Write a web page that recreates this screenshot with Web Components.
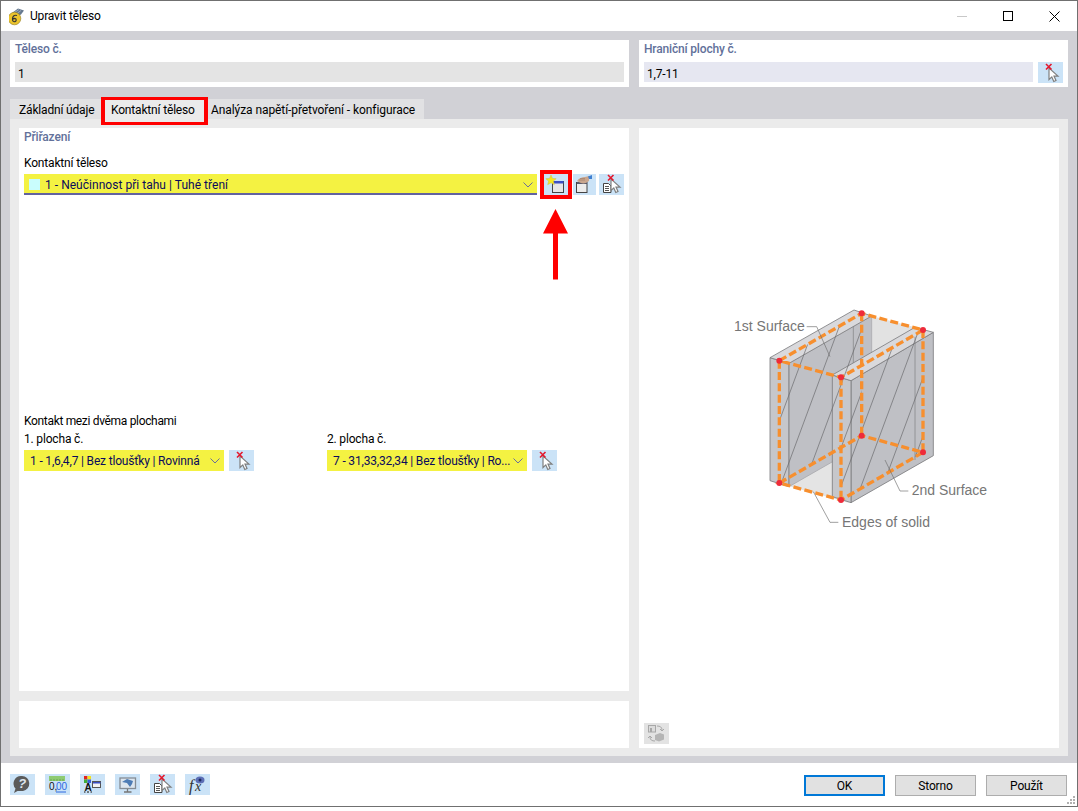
<!DOCTYPE html>
<html lang="cs">
<head>
<meta charset="utf-8">
<title>Upravit těleso</title>
<style>
  html, body { margin: 0; background: #fff; }
  body { font: 12px Roboto, "Liberation Sans", sans-serif; color: #000; letter-spacing: -.17px; }
  .top-row { display: flex; gap: 10px; }
  .top-row rs-field:first-child { width: 619px; }
  .top-row rs-field:last-child { width: 429px; }
  .split { display: grid; grid-template-columns: 610px 420px; gap: 10px; height: 620px; }
  .left { display: flex; flex-direction: column; gap: 10px; }
  .line { height: 18px; line-height: 18px; }
  .head { color: #62719a; font-weight: 500; }
  .row { display: flex; align-items: stretch; position: relative; }
  .row rs-combo { width: 513px; letter-spacing: .03px; }
  .pairs { display: grid; grid-template-columns: 303px 1fr; }
  .pair { display: flex; gap: 5px; margin-top: 2px; }
  .pair rs-combo { width: 200px; }
  rs-arrow { position: absolute; left: 519px; top: 35px; }
</style>
</head>
<body>
<rs-dialog heading="Upravit těleso">
  <div class="top-row">
    <rs-field label="Těleso č." value="1"></rs-field>
    <rs-field label="Hraniční plochy č." value="1,7-11" tone="blue"><rs-icon-btn icon="pick"></rs-icon-btn></rs-field>
  </div>
  <rs-tabs>
    <rs-tab w="91">Základní údaje</rs-tab>
    <rs-tab w="107" active>Kontaktní těleso</rs-tab>
    <rs-tab w="216" pad="3" style="letter-spacing:-.08px">Analýza napětí-přetvoření - konfigurace</rs-tab>
    <div slot="body" class="split">
      <div class="left">
        <rs-panel style="height:563px">
          <div class="line head">Přiřazení</div>
          <div class="line" style="margin-top:8px">Kontaktní těleso</div>
          <div class="row" style="margin-top:2px">
            <rs-combo text="1 - Neúčinnost při tahu | Tuhé tření" swatch underline></rs-combo>
            <rs-icon-btn icon="newwin" marked style="width:24px;margin-left:7px"></rs-icon-btn>
            <rs-icon-btn icon="handwin" style="width:23px;margin-left:5px"></rs-icon-btn>
            <rs-icon-btn icon="docpick" style="margin-left:3px"></rs-icon-btn>
            <rs-arrow></rs-arrow>
          </div>
          <div class="line" style="margin-top:217px;letter-spacing:-.33px">Kontakt mezi dvěma plochami</div>
          <div class="pairs">
            <div>
              <div class="line">1. plocha č.</div>
              <div class="pair"><rs-combo text="1 - 1,6,4,7 | Bez tloušťky | Rovinná"></rs-combo><rs-icon-btn icon="pick"></rs-icon-btn></div>
            </div>
            <div>
              <div class="line">2. plocha č.</div>
              <div class="pair"><rs-combo text="7 - 31,33,32,34 | Bez tloušťky | Ro..."></rs-combo><rs-icon-btn icon="pick"></rs-icon-btn></div>
            </div>
          </div>
        </rs-panel>
        <rs-panel style="height:47px"></rs-panel>
      </div>
      <rs-diagram><rs-icon-btn icon="swap" disabled></rs-icon-btn></rs-diagram>
    </div>
  </rs-tabs>
  <rs-icon-btn slot="tools" icon="help"></rs-icon-btn>
  <rs-icon-btn slot="tools" icon="decimals"></rs-icon-btn>
  <rs-icon-btn slot="tools" icon="colors"></rs-icon-btn>
  <rs-icon-btn slot="tools" icon="monitor"></rs-icon-btn>
  <rs-icon-btn slot="tools" icon="docpick"></rs-icon-btn>
  <rs-icon-btn slot="tools" icon="fx"></rs-icon-btn>
  <rs-button slot="actions" primary>OK</rs-button>
  <rs-button slot="actions">Storno</rs-button>
  <rs-button slot="actions">Použít</rs-button>
</rs-dialog>

<script>
const pickParts = (x, y) => `
  <path d="M${x} ${y}v11.500l2.800-2.600 2 4.600 2.200-1-2-4.400h4z" fill="#fff" stroke="#7f7f7f" stroke-width="1.200"/>
  <path d="M${x-3} ${y-4}l5.500 5.500M${x+2.500} ${y-4}l-5.500 5.500" stroke="#e3182d" stroke-width="1.600"/>`;

const ICONS = {
  pick: pickParts(11, 6),
  newwin: `
    <rect x="8.500" y="7.500" width="11" height="11" fill="#e6e6e6" stroke="#444"/>
    <rect x="9" y="7" width="10.500" height="2.500" fill="#3a4fc4"/>
    <path d="M7 1l1.500 3.400 3.700.3-2.800 2.400.9 3.600L7 8.800l-3.300 1.900.9-3.600L1.800 4.700l3.700-.3z" fill="#f6e61e" stroke="#c9bc4a" stroke-width=".5"/>`,
  handwin: `
    <rect x="3.500" y="8.500" width="10.500" height="10" fill="#ececec" stroke="#444"/>
    <rect x="4" y="8" width="10" height="2" fill="#55586b"/>
    <path d="M4 7c2-3 5-4 8-4l4-1v5l-3 2c-3 1-6 0-9-2z" fill="#c9a68e"/>
    <path d="M6 6h6M7 4.500h5" stroke="#a07f6c" stroke-width=".7"/>
    <path d="M15 2.500l4-1.500v4h-3z" fill="#3f7fd0"/>`,
  docpick: `
    <path d="M4.500 9.500h5l2.500 2.500v6.500H4.500z" fill="#fff" stroke="#444"/>
    <path d="M6 12.500h4M6 14.500h4M6 16.500h4" stroke="#444" stroke-width=".9"/>` + pickParts(12, 5),
  help: `
    <path d="M12 2a7.500 7.500 0 0 1 1 14.900c-2 .3-4 .2-5.500.2L4 19l1.500-4.500A7.500 7.500 0 0 1 12 2z" fill="#5b5b5b"/>
    <text x="12.200" y="14" font-family="Liberation Sans, sans-serif" font-size="13" font-weight="bold" font-style="italic" text-anchor="middle" fill="#dfe6ee">?</text>`,
  decimals: `
    <rect x="4" y="2" width="16" height="5" fill="#8ecb72"/>
    <path d="M6 5v2M9 5v2M12 5v2M15 5v2M18 5v2" stroke="#5f9c49" stroke-width=".8"/>
    <text x="4" y="16" font-family="Liberation Sans, sans-serif" font-size="10" fill="#111">0,</text>
    <text x="11" y="16" font-family="Liberation Sans, sans-serif" font-size="10" fill="#2c68e0">00</text>
    <path d="M11 18h10" stroke="#2c68e0" stroke-width="1"/>`,
  colors: `
    <rect x="4" y="2" width="3.500" height="3.500" fill="#e32222"/>
    <rect x="7.500" y="2" width="3.500" height="3.500" fill="#f4e21c"/>
    <rect x="4" y="5.500" width="3.500" height="3.500" fill="#3fae3a"/>
    <rect x="7.500" y="5.500" width="3.500" height="3.500" fill="#3a5fd8"/>
    <text x="8" y="17" font-family="Liberation Sans, sans-serif" font-size="10" font-weight="bold" text-anchor="middle" fill="#111">A</text>
    <path d="M4 18h1.500M7 18h2M10.500 18H12" stroke="#111" stroke-width="1"/>
    <rect x="12.500" y="7.500" width="8" height="6" fill="#f3f3f3" stroke="#555"/>
    <rect x="13" y="8" width="7.500" height="1.500" fill="#3a4fc4"/>`,
  monitor: `
    <rect x="5" y="4" width="15.500" height="10.500" fill="#dce6ef" stroke="#858d95" stroke-width="1.300"/>
    <path d="M7 8l5-3 6 2-1 3-2 3-3-4z" fill="#4d7cb5"/>
    <path d="M12.500 15v2.500M9 18h7.500" stroke="#777" stroke-width="1.300"/>`,
  fx: `
    <text x="4" y="17" font-family="Liberation Serif, serif" font-size="16" font-style="italic" fill="#333">f</text>
    <text x="10" y="17" font-family="Liberation Serif, serif" font-size="14" font-style="italic" fill="#333">x</text>
    <ellipse cx="15" cy="6" rx="4.500" ry="3.500" fill="#5d6fb6"/>
    <circle cx="15" cy="6" r="1.500" fill="#1d2a60"/>`,
  swap: `
    <rect x="4.500" y="2.500" width="7" height="6.500" fill="#dcdcdc" stroke="#a8a8a8"/>
    <rect x="6" y="5" width="2" height="4" fill="#a8a8a8"/>
    <path d="M13 3c3 0 5 1 5 4M16 6l2 2 2-2M11 18c-3 0-5-1-5-4M4 15l2-2 2 2" fill="none" stroke="#a8a8a8"/>
    <path d="M11 12l5-2 4 1.500v5l-5 2-4-1.500z" fill="#b5b5b5"/>`
};

class RsDialog extends HTMLElement {
  constructor() {
    super();
    this.attachShadow({mode:'open'}).innerHTML = `
      <style>
        :host { display: flex; flex-direction: column; box-sizing: border-box; width: 1078px; height: 807px;
          border: 1px solid #707070; background: #fff; position: relative; }
        .bar { height: 30px; display: flex; align-items: center; flex: none; }
        .logo { margin-left: 8px; width: 18px; height: 18px; margin-top: 1px; }
        .title { margin-left: 3px; font-size: 12px; }
        .ctl { margin-left: auto; display: flex; }
        .ctl span { width: 46px; height: 30px; display: flex; align-items: center; justify-content: center; }
        main { flex: none; height: 732px; box-sizing: border-box; background: #d1d1d6; padding: 9px 9px 0; }
        footer { flex: 1; display: flex; padding: 11px 10px 0 9px; }
        .tools { display: flex; gap: 10px; }
        .tools ::slotted(*) { height: 21px; }
        .actions { margin-left: auto; display: flex; gap: 10px; margin-top: 1px; height: 21px; }
        .grip { position: absolute; right: 1px; bottom: 1px; }
      </style>
      <div class="bar">
        <svg class="logo" viewBox="0 0 18 18">
          <path d="M1 6.500L9 .5l6 2-3 4-6 3z" fill="#66798f"/>
          <path d="M4 5.500l6-4M6 7l6-4.500" stroke="#a9b8c9" stroke-width=".8"/>
          <circle cx="5.500" cy="10.500" r="6.300" fill="#ecc42c" stroke="#8f7a22" stroke-width=".6"/>
          <path d="M8 7.500c-3-1-4.500 1-4.500 3.500s1.200 3 2.500 2.600 2-3-.3-3.200c-1 0-1.700.5-2 1" fill="none" stroke="#333" stroke-width="1.200"/>
        </svg>
        <span class="title"></span>
        <div class="ctl">
          <span><svg width="10" height="10"><path d="M0 5.500h10" stroke="#c8c8c8"/></svg></span>
          <span><svg width="10" height="10"><rect x=".5" y=".5" width="9" height="9" fill="none" stroke="#000"/></svg></span>
          <span><svg width="11" height="11"><path d="M.5.500l10 10M10.500.500l-10 10" stroke="#000"/></svg></span>
        </div>
      </div>
      <main><slot></slot></main>
      <footer>
        <div class="tools"><slot name="tools"></slot></div>
        <div class="actions"><slot name="actions"></slot></div>
      </footer>
      <svg class="grip" width="10" height="9" fill="#b0b0b0">
        <rect x="7" y="0" width="2" height="2"/><rect x="4" y="3" width="2" height="2"/><rect x="7" y="3" width="2" height="2"/>
        <rect x="1" y="6" width="2" height="2"/><rect x="4" y="6" width="2" height="2"/><rect x="7" y="6" width="2" height="2"/>
      </svg>`;
    this.shadowRoot.querySelector('.title').textContent = this.getAttribute('heading');
  }
}

class RsField extends HTMLElement {
  constructor() {
    super();
    this.attachShadow({mode:'open'}).innerHTML = `
      <style>
        :host { display: block; box-sizing: border-box; height: 47px; background: #fff; padding: 0 5px; }
        .label { height: 22px; line-height: 18px; color: #62719a; font-weight: 500; }
        .row { display: flex; gap: 5px; }
        .input { flex: 1; height: 20px; line-height: 24px; padding-left: 3px; background: #e4e4e4; overflow: hidden; }
        :host([tone=blue]) .input { background: #e6e7f1; }
        ::slotted(*) { height: 21px; }
      </style>
      <div class="label"></div>
      <div class="row"><div class="input"></div><slot></slot></div>`;
    this.shadowRoot.querySelector('.label').textContent = this.getAttribute('label');
    this.shadowRoot.querySelector('.input').textContent = this.getAttribute('value');
  }
}

class RsTabs extends HTMLElement {
  constructor() {
    super();
    this.attachShadow({mode:'open'}).innerHTML = `
      <style>
        :host { display: block; margin-top: 12px; }
        .strip { display: flex; height: 20px; }
        .body { height: 637px; box-sizing: border-box; background: #ebebeb; padding: 9px; }
      </style>
      <div class="strip"><slot></slot></div>
      <div class="body"><slot name="body"></slot></div>`;
  }
}

class RsTab extends HTMLElement {
  constructor() {
    super();
    this.attachShadow({mode:'open'}).innerHTML = `
      <style>
        :host { display: block; position: relative; box-sizing: border-box; background: #e1e1e3;
          line-height: 22px; white-space: nowrap; }
        :host([active]) { background: #ebebeb; }
        .mark { display: none; position: absolute; left: 0; right: 0; top: -2px; bottom: -6px;
          border: solid #f00; border-width: 3px 4px; }
        :host([active]) .mark { display: block; }
      </style>
      <slot></slot><div class="mark"></div>`;
    this.style.width = this.getAttribute('w') + 'px';
    const pad = this.getAttribute('pad') || (this.hasAttribute('active') ? 10 : 9);
    this.style.paddingLeft = pad + 'px';
  }
}

class RsPanel extends HTMLElement {
  constructor() {
    super();
    this.attachShadow({mode:'open'}).innerHTML = `
      <style>:host { display: block; box-sizing: border-box; background: #fff; padding: 0 5px; }</style>
      <slot></slot>`;
  }
}

class RsCombo extends HTMLElement {
  constructor() {
    super();
    this.attachShadow({mode:'open'}).innerHTML = `
      <style>
        :host { display: flex; align-items: center; box-sizing: border-box; height: 21px;
          background: #f4f242; color: #0b0b5c; padding-left: 6px; white-space: nowrap; }
        :host([underline]) { border-bottom: 2px solid #62629f; padding: 2px 0 0 5px; }
        .sw { display: none; width: 11px; height: 11px; background: #c9fdfd; margin: -1px 5px 0 0; }
        :host([swatch]) .sw { display: block; }
        svg { margin-left: auto; margin-right: 4px; }
      </style>
      <span class="sw"></span><span class="txt"></span>
      <svg width="10" height="6"><path d="M.5.500l4.500 4.500 4.500-4.500" fill="none" stroke="#6b6f99"/></svg>`;
    this.shadowRoot.querySelector('.txt').textContent = this.getAttribute('text');
  }
}

class RsIconBtn extends HTMLElement {
  constructor() {
    super();
    this.attachShadow({mode:'open'}).innerHTML = `
      <style>
        :host { display: block; position: relative; width: 25px; background: #cbe3f7; flex: none; }
        :host([disabled]) { background: #e3e3e3; height: 21px; }
        svg { display: block; width: 25px; height: 21px; position: relative; }
        .mark { display: none; position: absolute; left: -4px; top: -4px; width: 32px; height: 29px;
          box-sizing: border-box; border: 4px solid #f00; }
        :host([marked]) .mark { display: block; }
      </style>
      <svg viewBox="0 0 25 21">${ICONS[this.getAttribute('icon')]}</svg><div class="mark"></div>`;
  }
}

class RsButton extends HTMLElement {
  constructor() {
    super();
    this.attachShadow({mode:'open'}).innerHTML = `
      <style>
        :host { display: flex; align-items: center; justify-content: center; box-sizing: border-box;
          width: 81px; height: 21px; background: #e1e1e1; border: 1px solid #adadad; }
        :host([primary]) { border: 2px solid #0078d7; }
      </style>
      <slot></slot>`;
  }
}

class RsArrow extends HTMLElement {
  constructor() {
    super();
    this.attachShadow({mode:'open'}).innerHTML = `
      <style>:host { display: block; width: 26px; height: 71px; } svg { display: block; }</style>
      <svg width="26" height="71"><path d="M12.500 0L25 24.500h-10V70.500h-5V24.500H0z" fill="#f00"/></svg>`;
  }
}

class RsDiagram extends HTMLElement {
  constructor() {
    super();
    const dots = [[193,197],[440,55],[624,105],[378,247],[193,564],[378,615],[624,472],[440,422]];
    // parallel hatch lines, clipped to each plate
    const hatch = (bases, y0) => bases.map(x =>
      `<path d="M${x} ${y0}L${x + 0.37 * 700} ${y0 - 700}"/>`).join('');
    this.attachShadow({mode:'open'}).innerHTML = `
      <style>
        :host { display: flex; flex-direction: column; align-items: flex-start; box-sizing: border-box;
          background: #fff; padding: 167px 0 4px 5px; letter-spacing: 0; }
        svg { display: block; margin-left: 71px; }
        ::slotted(*) { margin-top: auto; }
        text { font: 42px "Liberation Sans", Arial, sans-serif; fill: #767676; }
      </style>
      <svg width="290" height="240" viewBox="0 0 870 720">
        <defs>
          <clipPath id="p1"><path d="M193 197L440 55V422L193 564z"/></clipPath>
          <clipPath id="p2"><path d="M378 247L624 105V472L378 615z"/></clipPath>
        </defs>
        <path d="M470 63L600 97V135L470 210z" fill="#e2e2e2"/>
        <path d="M190 565L470 433L655 482L400 623z" fill="#e4e4e4"/>
        <g stroke="#7d7d80" stroke-width="2.500" stroke-linejoin="round">
          <path d="M165 188L222 205V575L165 557z" fill="#c6c7cb"/>
          <path d="M222 205L470 63V433L222 575z" fill="#bfc0c5" stroke="#a9a9ad"/>
          <path d="M165 188L417 45L470 63L222 205z" fill="#d9d9dc"/>
          <path d="M222 205V575M415 95V465" fill="none" stroke-width="2"/>
          <path d="M408 257L655 112V482L408 623z" fill="#bfc0c5"/>
          <path d="M352 240L408 257V623L352 605z" fill="#c6c7cb"/>
          <path d="M352 240L600 97L655 112L408 257z" fill="#d9d9dc"/>
          <path d="M600 125V495" fill="none" stroke-width="2"/>
        </g>
        <g stroke="#66666a" stroke-width="2" fill="none">
          <g clip-path="url(#p1)">${hatch([120, 195, 265, 335, 405], 575)}</g>
          <g clip-path="url(#p2)">${hatch([360, 420, 485, 550, 615, 680], 623)}</g>
        </g>
        <g stroke="#f78f2e" stroke-width="10" stroke-dasharray="24 10" fill="none">
          <path d="M193 197L440 55L624 105L378 247z"/>
          <path d="M193 197V564M378 247V615M624 105V472M440 55V422"/>
          <path d="M193 564L440 422L624 472L378 615z"/>
        </g>
        <g fill="#ee2b3a">${dots.map(d => `<circle cx="${d[0]}" cy="${d[1]}" r="9"/>`).join('')}</g>
        <g stroke="#6f6f6f" stroke-width="2" fill="none">
          <path d="M275 95H305L345 185M510 495L555 588H580M295 590L345 682H370"/>
        </g>
        <text x="57" y="108">1st Surface</text>
        <text x="590" y="601">2nd Surface</text>
        <text x="381" y="696">Edges of solid</text>
      </svg>
      <slot></slot>`;
  }
}

customElements.define('rs-dialog', RsDialog);
customElements.define('rs-field', RsField);
customElements.define('rs-tabs', RsTabs);
customElements.define('rs-tab', RsTab);
customElements.define('rs-panel', RsPanel);
customElements.define('rs-combo', RsCombo);
customElements.define('rs-icon-btn', RsIconBtn);
customElements.define('rs-button', RsButton);
customElements.define('rs-arrow', RsArrow);
customElements.define('rs-diagram', RsDiagram);
</script>
</body>
</html>
